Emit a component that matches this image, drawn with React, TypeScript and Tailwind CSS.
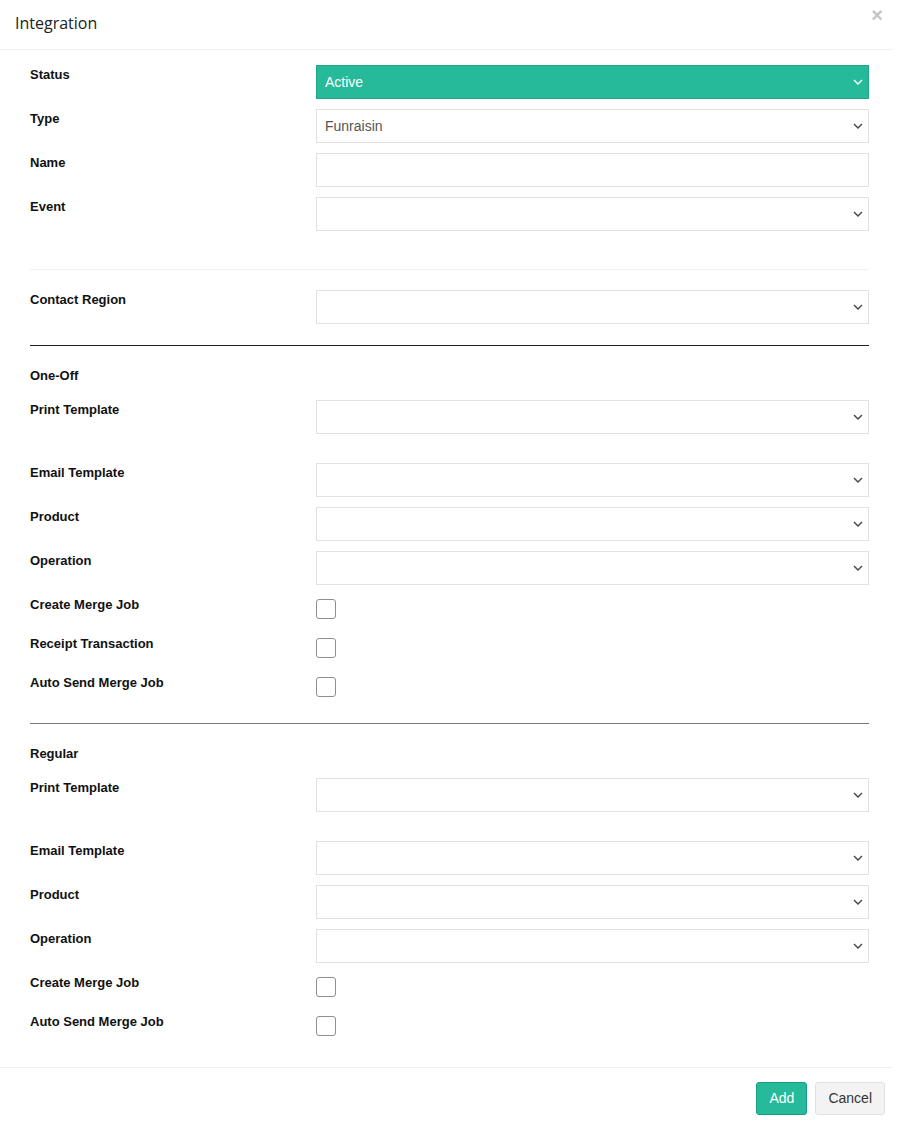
import React from "react";

const Chevron = ({ light }: { light?: boolean }) => (
  <svg
    width="10"
    height="6"
    viewBox="0 0 10 6"
    className="absolute right-[5px] top-1/2 -translate-y-1/2"
  >
    <path
      d="M1 1l4 4 4-4"
      fill="none"
      stroke={light ? "#ffffff" : "#444444"}
      strokeWidth="1.4"
    />
  </svg>
);

function Field({
  label,
  kind = "select",
  value,
  className = "mb-[10px]",
}: {
  label: string;
  kind?: "select" | "input" | "status";
  value?: string;
  className?: string;
}) {
  return (
    <div className={`flex ${className}`}>
      <div className="w-[286px] text-[13px] leading-[20px] font-bold text-[#111]">
        {label}
      </div>
      {kind === "status" ? (
        <div className="relative flex-1 h-[34px] bg-[#26b99a] border border-[#1fa687] flex items-center px-[8px] text-[14px] text-white">
          {value}
          <Chevron light />
        </div>
      ) : (
        <div className="relative flex-1 h-[34px] bg-white border border-[#e2e2e6] flex items-center px-[8px] text-[14px] text-[#555]">
          {value}
          {kind === "select" && <Chevron />}
        </div>
      )}
    </div>
  );
}

function Check({ label }: { label: string }) {
  return (
    <div className="flex h-[39px]">
      <div className="w-[286px] text-[13px] leading-[20px] font-bold text-[#111]">
        {label}
      </div>
      <div className="mt-[4px] w-[20px] h-[20px] rounded-[3px] border-[1.5px] border-[#8f8f8f] bg-white" />
    </div>
  );
}

export default function App() {
  return (
    <div className="w-[893px] bg-white font-['Liberation_Sans',Arial,sans-serif] text-[#333]">
      {/* header */}
      <div className="relative h-[50px] border-b border-[#eef0f2] flex items-center pl-[15px] pb-[4px]">
        <h4 className="font-['Open_Sans',sans-serif] text-[16px] text-[#222]">
          Integration
        </h4>
        <span className="absolute right-[10px] top-[3px] text-[20px] font-bold text-[#c4c4c4] leading-[24px]">
          ×
        </span>
      </div>

      {/* body */}
      <div className="pl-[30px] pr-[24px] pt-[15px] pb-[16px]">
        <Field label="Status" kind="status" value="Active" />
        <Field label="Type" value="Funraisin" />
        <Field label="Name" kind="input" />
        <Field label="Event" className="mb-[38px]" />

        <div className="border-t border-[#eef0f2] mb-[20px]" />
        <Field label="Contact Region" className="mb-[21px]" />

        <div className="border-t-[1.5px] border-[#222]" />
        <div className="pt-[20px] h-[54px] text-[13px] leading-[20px] font-bold text-[#111]">
          One-Off
        </div>
        <Field label="Print Template" className="mb-[29px]" />
        <Field label="Email Template" />
        <Field label="Product" />
        <Field label="Operation" />
        <Check label="Create Merge Job" />
        <Check label="Receipt Transaction" />
        <Check label="Auto Send Merge Job" />

        <div className="border-t border-[#777] mt-[11px]" />
        <div className="pt-[20px] h-[54px] text-[13px] leading-[20px] font-bold text-[#111]">
          Regular
        </div>
        <Field label="Print Template" className="mb-[29px]" />
        <Field label="Email Template" />
        <Field label="Product" />
        <Field label="Operation" />
        <Check label="Create Merge Job" />
        <Check label="Auto Send Merge Job" />
      </div>

      {/* footer */}
      <div className="border-t border-[#eef0f2] flex justify-end gap-[8px] pt-[14px] pb-[10px] pr-[8px]">
        <button className="h-[33px] px-[12px] rounded-[3px] bg-[#26b99a] border border-[#169f85] text-white text-[14px]">
          Add
        </button>
        <button className="h-[33px] px-[12px] rounded-[3px] bg-[#f3f3f3] border border-[#e0e0e0] text-[#333] text-[14px]">
          Cancel
        </button>
      </div>
    </div>
  );
}
